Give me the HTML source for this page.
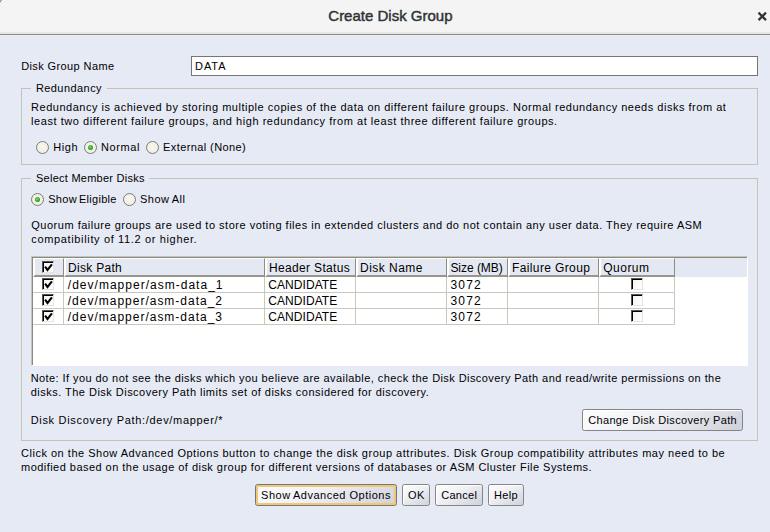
<!DOCTYPE html>
<html><head><meta charset="utf-8">
<style>
*{margin:0;padding:0;box-sizing:border-box}
html,body{width:770px;height:532px;overflow:hidden;background:#e6eaf5}
body{position:relative;font-family:"Liberation Sans",sans-serif;font-size:11px;color:#000}
.a{position:absolute;white-space:pre;line-height:14px}
.blk{position:absolute}
#tb{position:absolute;left:0;top:0;width:770px;height:36px;background:linear-gradient(#f4f4f4 0,#f4f4f4 32px,#e7e7e4 32px,#e7e7e4 34px,#8a8984 34px,#8a8984 35px,#edf0fb 35px)}
#close{position:absolute;left:757px;top:11px;width:10px;height:10px}
.field{position:absolute;left:191px;top:56px;width:567px;height:20px;background:#fff;border:1px solid #767676}
.grp{position:absolute;border:1px solid #c3c3b4}
.gap{position:absolute;height:3px;background:#e6eaf5}
.radio{position:absolute;width:13px;height:13px;border-radius:50%;border:1.2px solid #7c7c78;background:radial-gradient(circle at 50% 45%,#f8f7ef 0,#f1efe3 70%,#e8e6d8 100%)}
.radio.on::after{content:"";position:absolute;left:3px;top:3px;width:5px;height:5px;border-radius:50%;background:radial-gradient(circle at 45% 40%,#7ddc7d 0,#2aa82a 55%,#117a11 100%)}
#sp{position:absolute;left:31px;top:256px;width:717px;height:110px;background:#fff;border-top:1px solid #c4c4b8;border-left:1px solid #c4c4b8;border-right:1px solid #fff;border-bottom:1px solid #fff}
#sp2{position:absolute;left:32px;top:257px;width:715px;height:108px;border-top:1px solid #8a8a82;border-left:1px solid #8a8a82}
#hdr{position:absolute;left:33px;top:258px;width:714px;height:19px;background:#e4e8f3}
.hc{position:absolute;top:258px;height:19px;border-left:2px solid #fff;border-top:1px solid #fff;border-right:1px solid #8c8c84;border-bottom:2px solid #96968a;background:#e4e8f3}
.gl{position:absolute;background:#c8c8bb}
.cb{position:absolute;width:12px;height:12px;background:linear-gradient(135deg,#f4f4f4,#fff);border-top:1px solid #555;border-left:1px solid #555;border-right:1px solid #e4e4e4;border-bottom:1px solid #e4e4e4;box-shadow:inset 1px 1px 0 #000}
.ck{position:absolute;left:1px;top:1px;width:9px;height:9px;overflow:visible}
.btn{position:absolute;height:22px;border:1px solid #858585;border-radius:2.5px;background:linear-gradient(150deg,#fdfdfe 0,#f1f2f6 40%,#cfd1da 100%);box-shadow:inset 1px 1px 0 #fff}
.btn.f{border-color:#767676;box-shadow:inset 0 0 0 2px #f3c676}
</style></head><body>
<div id="tb"></div>
<div class="blk" style="left:0;top:0;width:1px;height:1px;background:#c9b792"></div>
<div class="blk" style="left:1px;top:0;width:1px;height:1px;background:#a9a59c"></div>
<div class="blk" style="left:0;top:1px;width:1px;height:1px;background:#8e806c"></div>
<div class="blk" style="left:1px;top:1px;width:1px;height:1px;background:#fbfbfb"></div>
<div class="blk" style="left:0;top:2px;width:1px;height:1px;background:#d8d8d6"></div>
<svg id="close" viewBox="0 0 10 10"><path d="M1.5 1.6L9 9.1M9 1.6L1.5 9.1" stroke="#2e3436" stroke-width="2.2"/></svg>

<div class="field"></div>

<div class="grp" style="left:21px;top:88px;width:737px;height:77px"></div>
<div class="gap" style="left:31px;top:87px;width:76px"></div>
<div class="radio" style="left:36px;top:141px"></div>
<div class="radio on" style="left:84px;top:141px"></div>
<div class="radio" style="left:146px;top:141px"></div>

<div class="grp" style="left:21px;top:178px;width:737px;height:263px"></div>
<div class="gap" style="left:31px;top:177px;width:118px"></div>
<div class="radio on" style="left:31px;top:193px"></div>
<div class="radio" style="left:123px;top:193px"></div>

<div id="sp"></div>
<div id="sp2"></div>
<div id="hdr"></div>
<div class="hc" style="left:33px;width:31px"></div>
<div class="hc" style="left:64px;width:201px"></div>
<div class="hc" style="left:265px;width:91px"></div>
<div class="hc" style="left:356px;width:91px"></div>
<div class="hc" style="left:447px;width:61px"></div>
<div class="hc" style="left:508px;width:91px"></div>
<div class="hc" style="left:599px;width:76px"></div>
<!-- grid -->
<div class="gl" style="left:33px;top:292px;width:642px;height:1px"></div>
<div class="gl" style="left:33px;top:308px;width:642px;height:1px"></div>
<div class="gl" style="left:33px;top:324px;width:642px;height:1px"></div>
<div class="gl" style="left:63px;top:277px;width:1px;height:48px"></div>
<div class="gl" style="left:264px;top:277px;width:1px;height:48px"></div>
<div class="gl" style="left:355px;top:277px;width:1px;height:48px"></div>
<div class="gl" style="left:446px;top:277px;width:1px;height:48px"></div>
<div class="gl" style="left:507px;top:277px;width:1px;height:48px"></div>
<div class="gl" style="left:598px;top:277px;width:1px;height:48px"></div>
<div class="gl" style="left:674px;top:277px;width:1px;height:48px"></div>
<!-- checkboxes -->
<div class="cb" style="left:42px;top:261px"><svg class="ck" viewBox="0 0 9 9"><path d="M1.1 3.6L3.5 6.9L7.9 1.4" fill="none" stroke="#000" stroke-width="2.1"/></svg></div>
<div class="cb" style="left:42px;top:278px"><svg class="ck" viewBox="0 0 9 9"><path d="M1.1 3.6L3.5 6.9L7.9 1.4" fill="none" stroke="#000" stroke-width="2.1"/></svg></div>
<div class="cb" style="left:42px;top:294px"><svg class="ck" viewBox="0 0 9 9"><path d="M1.1 3.6L3.5 6.9L7.9 1.4" fill="none" stroke="#000" stroke-width="2.1"/></svg></div>
<div class="cb" style="left:42px;top:310px"><svg class="ck" viewBox="0 0 9 9"><path d="M1.1 3.6L3.5 6.9L7.9 1.4" fill="none" stroke="#000" stroke-width="2.1"/></svg></div>
<div class="cb" style="left:631px;top:278px"></div>
<div class="cb" style="left:631px;top:294px"></div>
<div class="cb" style="left:631px;top:310px"></div>

<div class="btn" style="left:582px;top:409px;width:161px"></div>
<div class="btn f" style="left:255px;top:484px;width:142px"></div>
<div class="btn" style="left:402px;top:484px;width:28px"></div>
<div class="btn" style="left:435px;top:484px;width:48px"></div>
<div class="btn" style="left:488px;top:484px;width:36px"></div>

<div class="a" style="left:328.30px;top:5.70px;letter-spacing:-0.001px;font-size:15px;line-height:20px;color:#2e3436;-webkit-text-stroke:0.45px #2e3436">Create Disk Group</div>
<div class="a" style="left:21.20px;top:58.89px;letter-spacing:0.391px">Disk Group Name</div>
<div class="a" style="left:195.10px;top:59.19px;letter-spacing:0.894px">DATA</div>
<div class="a" style="left:35.90px;top:80.59px;letter-spacing:0.435px">Redundancy</div>
<div class="a" style="left:31.10px;top:100.19px;letter-spacing:0.513px">Redundancy is achieved by storing multiple copies of the data on different failure groups. Normal redundancy needs disks from at</div>
<div class="a" style="left:31.10px;top:114.19px;letter-spacing:0.544px">least two different failure groups, and high redundancy from at least three different failure groups.</div>
<div class="a" style="left:53.30px;top:139.79px;letter-spacing:0.592px">High</div>
<div class="a" style="left:101.00px;top:139.79px;letter-spacing:0.589px">Normal</div>
<div class="a" style="left:163.00px;top:139.79px;letter-spacing:0.411px">External (None)</div>
<div class="a" style="left:36.00px;top:170.89px;letter-spacing:0.254px">Select Member Disks</div>
<div class="a" style="left:48.20px;top:191.99px;letter-spacing:0.289px">Show Eligible</div>
<div class="a" style="left:140.00px;top:191.99px;letter-spacing:0.489px">Show All</div>
<div class="a" style="left:31.30px;top:218.09px;letter-spacing:0.506px">Quorum failure groups are used to store voting files in extended clusters and do not contain any user data. They require ASM</div>
<div class="a" style="left:31.30px;top:231.69px;letter-spacing:0.647px">compatibility of 11.2 or higher.</div>
<div class="a" style="left:68.00px;top:259.84px;letter-spacing:0.305px;font-size:12px;line-height:16px">Disk Path</div>
<div class="a" style="left:269.00px;top:259.84px;letter-spacing:0.340px;font-size:12px;line-height:16px">Header Status</div>
<div class="a" style="left:360.10px;top:259.84px;letter-spacing:0.464px;font-size:12px;line-height:16px">Disk Name</div>
<div class="a" style="left:450.40px;top:259.84px;letter-spacing:-0.034px;font-size:12px;line-height:16px">Size (MB)</div>
<div class="a" style="left:512.00px;top:259.84px;letter-spacing:0.377px;font-size:12px;line-height:16px">Failure Group</div>
<div class="a" style="left:603.30px;top:259.84px;letter-spacing:0.468px;font-size:12px;line-height:16px">Quorum</div>
<div class="a" style="left:67.80px;top:276.84px;letter-spacing:1.014px;font-size:12px;line-height:16px">/dev/mapper/asm-data_1</div>
<div class="a" style="left:67.80px;top:292.84px;letter-spacing:0.990px;font-size:12px;line-height:16px">/dev/mapper/asm-data_2</div>
<div class="a" style="left:67.80px;top:308.84px;letter-spacing:0.990px;font-size:12px;line-height:16px">/dev/mapper/asm-data_3</div>
<div class="a" style="left:268.20px;top:276.84px;letter-spacing:0.081px;font-size:12px;line-height:16px">CANDIDATE</div>
<div class="a" style="left:268.20px;top:292.84px;letter-spacing:0.081px;font-size:12px;line-height:16px">CANDIDATE</div>
<div class="a" style="left:268.20px;top:308.84px;letter-spacing:0.081px;font-size:12px;line-height:16px">CANDIDATE</div>
<div class="a" style="left:450.40px;top:276.84px;letter-spacing:1.232px;font-size:12px;line-height:16px">3072</div>
<div class="a" style="left:450.40px;top:292.84px;letter-spacing:1.232px;font-size:12px;line-height:16px">3072</div>
<div class="a" style="left:450.40px;top:308.84px;letter-spacing:1.232px;font-size:12px;line-height:16px">3072</div>
<div class="a" style="left:30.70px;top:370.79px;letter-spacing:0.425px">Note: If you do not see the disks which you believe are available, check the Disk Discovery Path and read/write permissions on the</div>
<div class="a" style="left:30.70px;top:384.79px;letter-spacing:0.480px">disks. The Disk Discovery Path limits set of disks considered for discovery.</div>
<div class="a" style="left:30.70px;top:413.19px;letter-spacing:0.683px">Disk Discovery Path:/dev/mapper/*</div>
<div class="a" style="left:588.20px;top:413.09px;letter-spacing:0.339px">Change Disk Discovery Path</div>
<div class="a" style="left:21.00px;top:445.89px;letter-spacing:0.515px">Click on the Show Advanced Options button to change the disk group attributes. Disk Group compatibility attributes may need to be</div>
<div class="a" style="left:21.00px;top:460.19px;letter-spacing:0.463px">modified based on the usage of disk group for different versions of databases or ASM Cluster File Systems.</div>
<div class="a" style="left:261.10px;top:487.99px;letter-spacing:0.507px">Show Advanced Options</div>
<div class="a" style="left:408.10px;top:487.99px;letter-spacing:0.294px">OK</div>
<div class="a" style="left:441.20px;top:487.99px;letter-spacing:0.290px">Cancel</div>
<div class="a" style="left:494.00px;top:487.99px;letter-spacing:0.292px">Help</div>
</body></html>
